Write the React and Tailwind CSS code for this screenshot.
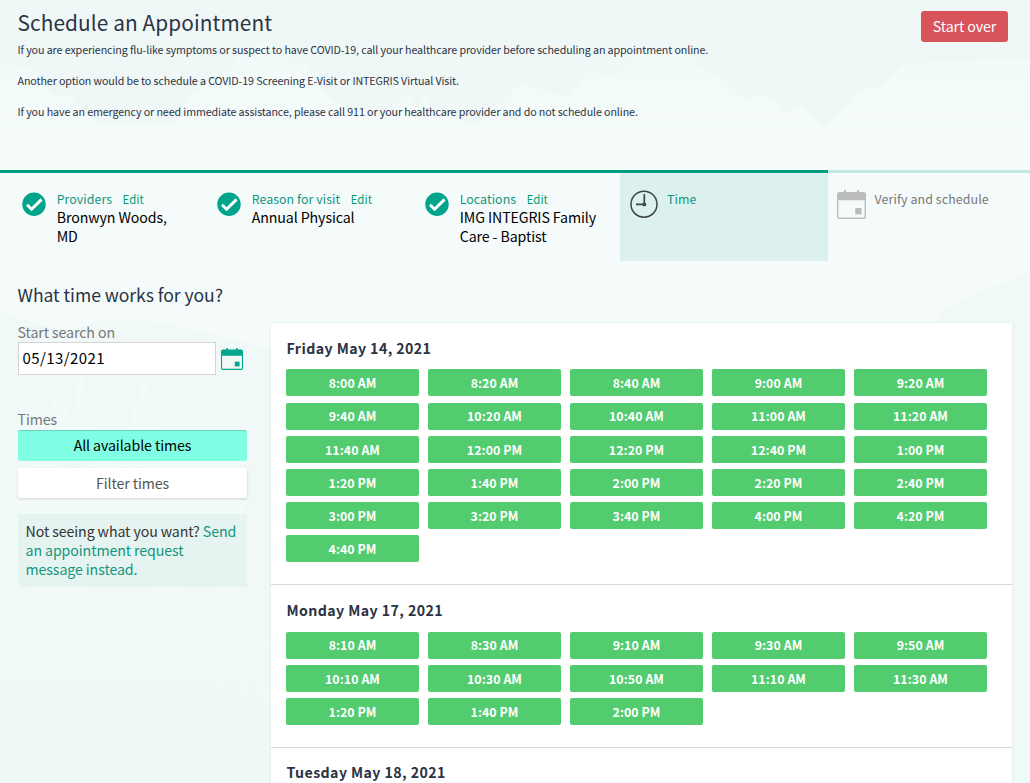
import React from "react";

const days = [
  {
    label: "Friday May 14, 2021",
    times: [
      "8:00 AM", "8:20 AM", "8:40 AM", "9:00 AM", "9:20 AM",
      "9:40 AM", "10:20 AM", "10:40 AM", "11:00 AM", "11:20 AM",
      "11:40 AM", "12:00 PM", "12:20 PM", "12:40 PM", "1:00 PM",
      "1:20 PM", "1:40 PM", "2:00 PM", "2:20 PM", "2:40 PM",
      "3:00 PM", "3:20 PM", "3:40 PM", "4:00 PM", "4:20 PM",
      "4:40 PM",
    ],
  },
  {
    label: "Monday May 17, 2021",
    times: [
      "8:10 AM", "8:30 AM", "9:10 AM", "9:30 AM", "9:50 AM",
      "10:10 AM", "10:30 AM", "10:50 AM", "11:10 AM", "11:30 AM",
      "1:20 PM", "1:40 PM", "2:00 PM",
    ],
  },
  { label: "Tuesday May 18, 2021", times: [] },
];

function Check() {
  return (
    <svg className="h-6 w-6 shrink-0" viewBox="0 0 24 24">
      <circle cx="12" cy="12.300" r="11.700" fill="#00a58c" />
      <path d="M5 12.700 L9.600 17.200 L19.600 7.400" fill="none" stroke="#fff" strokeWidth="3" />
    </svg>
  );
}

function Clock() {
  return (
    <svg className="h-7 w-7 shrink-0" viewBox="0 0 28 28">
      <circle cx="14" cy="14.200" r="13" fill="none" stroke="#404545" strokeWidth="1.500" />
      <path d="M14.300 4V14.400M6 14.400h8.300" fill="none" stroke="#404545" strokeWidth="1.700" />
      <circle cx="14.300" cy="14.400" r="1.900" fill="#404545" />
    </svg>
  );
}

function Calendar({ className }) {
  return (
    <svg className={className} viewBox="0 0 29 29" fill="currentColor">
      <path d="M7 0h2v3H7zM20 0h2v3h-2z" />
      <path d="M2.500 2h24a2.500 2.500 0 0 1 2.500 2.500V10.300H0V4.500A2.500 2.500 0 0 1 2.500 2z" />
      <rect x=".7" y="6" width="27.600" height="22.200" rx="1.800" fill="none" stroke="currentColor" strokeWidth="1.400" />
      <rect x="18.200" y="18" width="6.300" height="6.300" />
    </svg>
  );
}

function Mountains() {
  return (
    <svg className="absolute inset-0 h-[783px] w-[1030px]" viewBox="0 0 1030 783">
      <defs>
        <linearGradient id="haze" x1="0" y1="0" x2="0" y2="1">
          <stop offset="0" stopColor="#f2faf9" />
          <stop offset=".15" stopColor="#f5fbfb" />
          <stop offset=".7" stopColor="#f5fbfb" />
          <stop offset="1" stopColor="#f1f9f8" />
        </linearGradient>
      </defs>
      <path
        fill="url(#haze)"
        d="M0 62L18 66 38 72 40 82 55 97 70 96 90 118 110 125 140 122 175 122 185 103 192 92 228 70 240 55 262 42 275 44 290 62 305 65 322 90 340 105 362 112 380 115 408 94 418 108 424 97 432 108 475 125 500 106 518 84 545 90 568 98 584 78 592 70 610 78 626 66 640 50 664 48 690 58 700 68 720 78 748 101 760 93 778 102 786 112 800 106 825 128 845 108 858 92 868 88 880 88 890 78 905 64 920 62 1030 60V783H0Z"
      />
      <path fill="#eff8f7" d="M0 312L30 322 70 330 110 318 160 322 205 332 255 345 271 350V783H0Z" opacity=".7" />
      <path fill="#eff8f7" d="M930 330L945 310 960 300 985 290 1030 272V783H930Z" opacity=".6" />
      <g fill="#f4fafa">
        <path d="M58 375l8 20h-4l9 24h-5l9 27H42l9-27h-4l8-24zM80 372l8 24h-4l9 26h-5l9 24H63l9-24zM144 376l7 20h-4l10 24h-5l11 26h-39l10-26h-4l9-24zM0 462l15 6 30-4 32 4 26-6 30 4 38-5 26-6 32-3 16 4V560H0z" opacity=".8" />
        <path d="M12 560l20 40-10 20 28 10-12 28 18-32 28-4 18 28-8-50 26-8 16 36 24 8-14-22 8-30 28-18 16 60 24 14-12-30 14-48 26 42 18 38-12 10 8 26 12 38-14-18-12-36-6 38-6-40-24 34 12-58z" opacity=".5" />
      </g>
    </svg>
  );
}

function DoneStep({ title, value, className }) {
  return (
    <div className={"flex pt-[19px] " + className}>
      <Check />
      <div className="-mt-px ml-[10.700px] text-[14.2px] leading-[19px] tracking-[-0.100px]">
        <div className="flex gap-[10.500px] leading-[16px] tracking-[0.050px] text-[#12957e]">
          <span className="text-[12.4px]">{title}</span>
          <span className="text-[11.4px] text-[#00a074]">Edit</span>
        </div>
        <div className="mt-px text-black">{value}</div>
      </div>
    </div>
  );
}

export default function App() {
  return (
    <div className="relative h-[783px] w-[1030px] overflow-hidden bg-[#eff8f7] font-['Noto_Sans_CJK_SC',sans-serif] text-[14.2px] leading-[19px] tracking-[-0.100px] text-[#2b3344]">
      <Mountains />
      <div className="relative flex h-full flex-col">
        <header className="flex h-[170px] shrink-0 items-start justify-between pt-[11px] pr-[22px] pl-[17.500px]">
          <div>
            <h1 className="-mt-px text-[20.800px] leading-[24px] tracking-[0.100px]">Schedule an Appointment</h1>
            <div className="mt-[8px] flex flex-col gap-[15px] text-[10.7px] leading-[16px]">
              <p>If you are experiencing flu-like symptoms or suspect to have COVID-19, call your healthcare provider before scheduling an appointment online.</p>
              <p>Another option would be to schedule a COVID-19 Screening E-Visit or INTEGRIS Virtual Visit.</p>
              <p>If you have an emergency or need immediate assistance, please call 911 or your healthcare provider and do not schedule online.</p>
            </div>
          </div>
          <button className="h-[31px] w-[87px] rounded-[3px] bg-[#d9535b] text-[14.2px] text-white">Start over</button>
        </header>

        <nav className="flex h-[91px] shrink-0">
          <div className="flex w-[620px] border-t-3 border-[#009d82]">
            <DoneStep className="w-[195px] pl-[22px]" title="Providers" value={<>Bronwyn Woods,<br />MD</>} />
            <DoneStep className="w-[208px] pl-[22px]" title="Reason for visit" value="Annual Physical" />
            <DoneStep className="w-[217px] pl-[22px]" title="Locations" value={<>IMG INTEGRIS Family<br />Care - Baptist</>} />
          </div>
          <div className="flex w-[208px] border-t-3 border-[#009d82] bg-[#dcf1ee] pt-[17px] pl-[10px]">
            <Clock />
            <span className="mt-px ml-[9px] text-[12.4px] leading-[16px] tracking-[0.100px] text-[#12957e]">Time</span>
          </div>
          <div className="flex w-[202px] border-t-3 border-[#c2e8e0] pt-[17px] pl-[9px]">
            <Calendar className="h-[29px] w-[29px] shrink-0 text-[#bbbdbc]" />
            <span className="mt-px ml-[8.500px] text-[12.4px] leading-[16px] tracking-[0.100px] text-[#777]">Verify and schedule</span>
          </div>
        </nav>

        <h2 className="mt-[22px] ml-[17.500px] h-[40px] shrink-0 text-[17.600px] leading-[24px] tracking-[-0.060px]">What time works for you?</h2>

        <main className="flex pl-[18px]">
          <aside className="w-[253px] shrink-0">
            <label className="-ml-[0.500px] block h-[19px] text-[#777]">Start search on</label>
            <div className="flex items-center gap-[5px]">
              <div className="flex h-[33px] w-[198px] items-center border border-[#d4d4d4] bg-white pb-[2px] pl-[3.500px] text-[15px] tracking-[0.400px] text-black">05/13/2021</div>
              <Calendar className="h-[22px] w-[22px] text-[#00a58c]" />
            </div>
            <div className="mt-[35px] mb-px -ml-[0.500px] h-[19px] text-[#777]">Times</div>
            <button className="block h-[31px] w-[229px] rounded-[2px] bg-[#80ffe4] text-black shadow-[inset_0_1px_1px_rgba(0,0,0,0.18)]">All available times</button>
            <button className="mt-[7px] block h-[30px] w-[229px] rounded-[2px] bg-white text-[#555] shadow-[0_1px_3px_rgba(0,0,0,0.16)]">Filter times</button>
            <div className="mt-4 h-[73px] w-[229px] bg-[#e5f4f1] pt-[8px] pl-[7.500px] whitespace-nowrap text-[#333]">
              Not seeing what you want? <span className="text-[#12957e]">Send<br />an appointment request<br />message instead.</span>
            </div>
          </aside>

          <section className="h-[462px] w-[741px] bg-white shadow-[0_0_3px_rgba(0,0,0,0.08)]">
            {days.map((day) => (
              <div key={day.label} className="border-b border-[#d8d8d8] px-[15px] pt-[16px] pb-[22.100px] last:pt-[15px]">
                <h3 className="pl-[0.500px] text-[14.2px] leading-[19px] font-bold tracking-[0.400px]">{day.label}</h3>
                <div className="mt-[11.400px] grid grid-cols-[repeat(5,133px)] gap-x-[9px] gap-y-[6.150px]">
                  {day.times.map((t) => (
                    <button key={t} className="h-[27px] rounded-[2px] bg-[#53cc70] pt-[1.800px] text-[12.4px] font-bold tracking-[0.050px] text-white">{t}</button>
                  ))}
                </div>
              </div>
            ))}
          </section>
        </main>
      </div>
    </div>
  );
}
